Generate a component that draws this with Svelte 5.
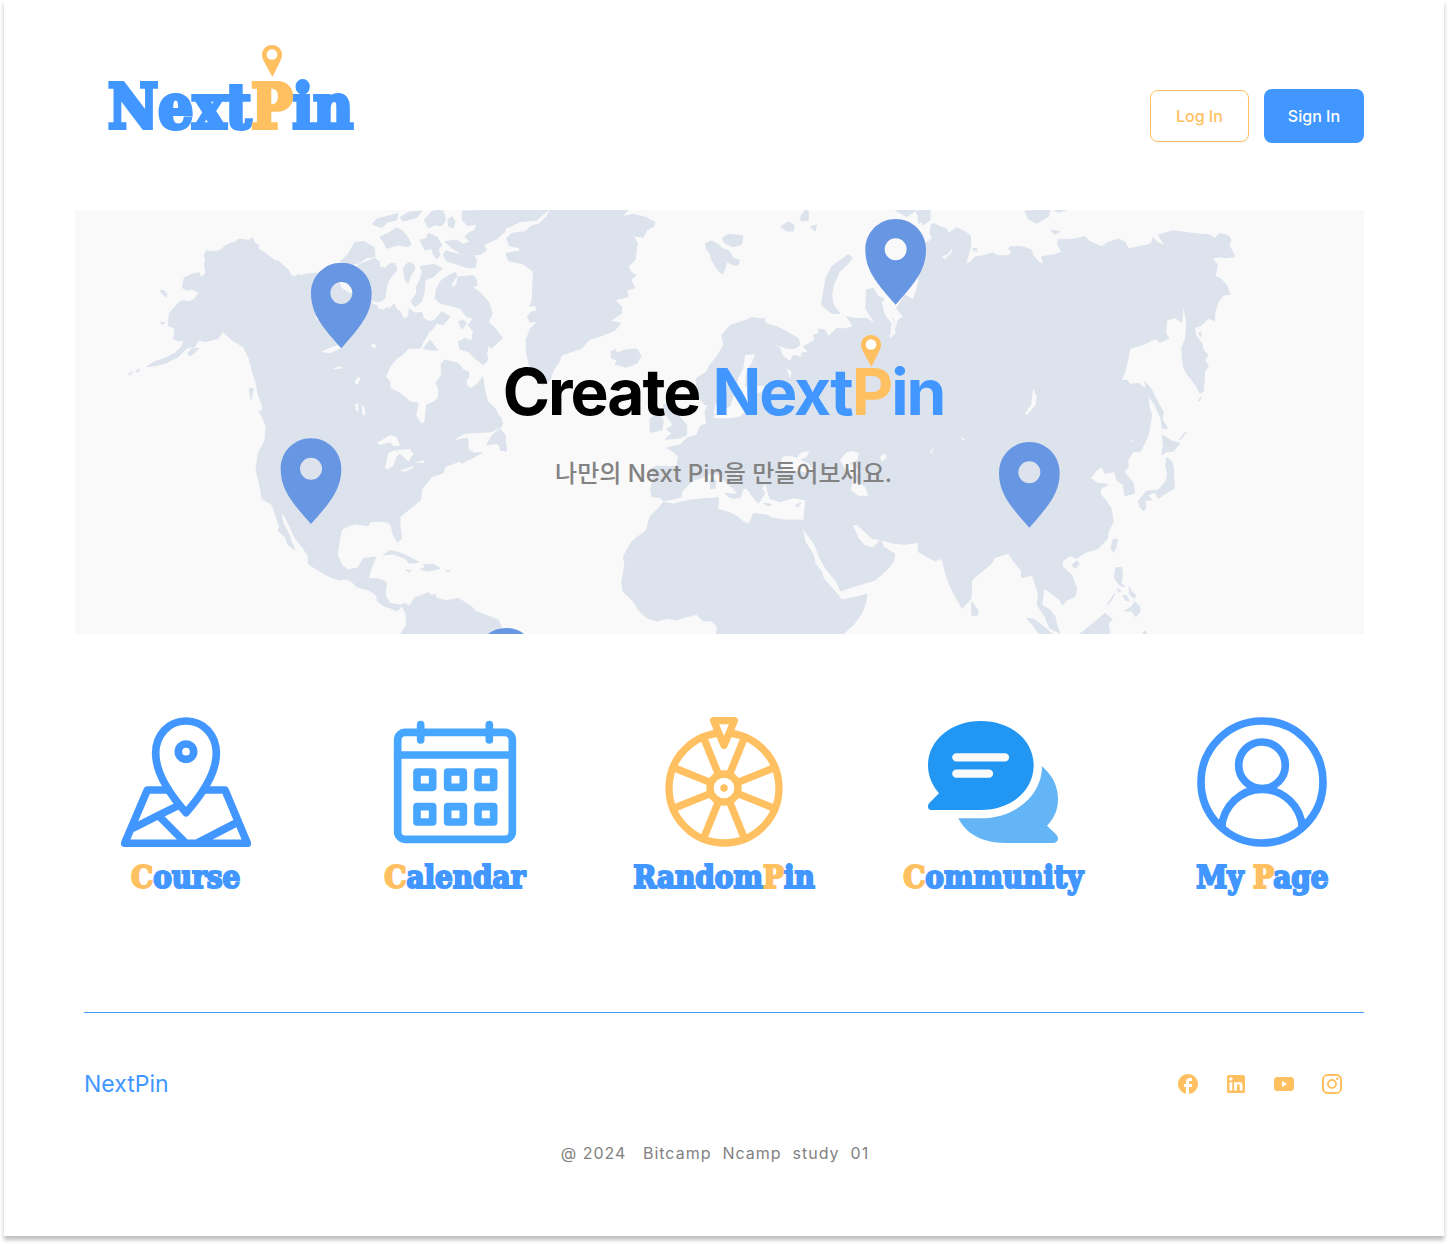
<script>
  const pins = [
    { x: 799, y: 173 },
    { x: 708, y: 700 },
    { x: 2462, y: 42 },
    { x: 2863, y: 711 },
    { x: 1293, y: 1269 }
  ];
  const dayCells = [
    [951, 216], [1043, 216], [1134, 216],
    [951, 320], [1043, 320], [1134, 320]
  ];
  const spokes = [22, 68, 112, 158, 202, 248, 292, 338];
  const features = [
    { id: 'course', parts: [['C', true], ['ourse', false]] },
    { id: 'calendar', parts: [['C', true], ['alendar', false]] },
    { id: 'random', parts: [['Random', false], ['P', true], ['in', false]] },
    { id: 'community', parts: [['C', true], ['ommunity', false]] },
    { id: 'mypage', parts: [['My ', false], ['P', true], ['age', false]] }
  ];
</script>

{#snippet smallPin()}
  <svg class="small-pin" viewBox="0 0 20 32" aria-hidden="true">
    <path fill="#ffc061" d="M10 0C4.300 0 0 4.300 0 9.800C0 12 .8 14 1.600 15.700L10.400 32L18.400 15.700C19.200 14 20 12 20 9.800C20 4.300 15.700 0 10 0Z" />
    <circle cx="10" cy="9.500" r="5.300" fill="#fff" />
  </svg>
{/snippet}

<div class="sheet">
  <header>
    <a class="logo" href="#home">Next<span class="gold pinned">P{@render smallPin()}</span>in</a>
    <div class="actions">
      <button class="login" type="button">Log In</button>
      <button class="signin" type="button">Sign In</button>
    </div>
  </header>

  <main>
    <section class="hero">
      <svg class="map" viewBox="0 15 3867 1272" preserveAspectRatio="xMidYMid slice" aria-hidden="true">
        <rect y="15" width="3867" height="1272" fill="#f9f9f9" />
        <g fill="#dde3ed" stroke="#dde3ed" stroke-width="3" stroke-linejoin="round">
          <!-- North and Central America -->
          <path d="M388 150L395 137 410 140 432 138 448 125 465 115 480 113 488 103 505 103 520 107 532 98 538 113 550 120 552 135 566 140 580 152 600 167 612 169 625 182 640 195 650 214 660 215 668 209 680 212 692 207 720 205 800 225 885 290 905 300 910 312 925 315 945 302 958 298 965 315 975 318 985 343 1000 335 1003 312 1020 325 1040 322 1045 340 1065 350 1060 385 1045 410 1035 430 1000 430 985 447 965 460 945 485 932 515 945 530 945 550 975 565 1005 590 1030 595 1022 632 1040 657 1050 650 1055 600 1075 592 1090 580 1092 555 1083 535 1100 510 1098 480 1108 465 1130 470 1150 475 1165 495 1180 500 1182 515 1172 530 1178 545 1190 550 1210 535 1223 515 1230 560 1238 590 1262 612 1270 630 1280 640 1280 665 1250 680 1170 685 1150 695 1130 710 1160 702 1178 700 1180 735 1200 745 1222 742 1200 755 1160 775 1155 768 1110 785 1105 803 1070 815 1055 835 1040 852 1037 885 1000 915 975 935 975 965 980 1000 968 1012 955 990 948 960 938 952 915 948 885 950 880 962 840 957 815 965 800 975 793 1005 787 1050 800 1080 820 1095 850 1088 865 1060 902 1057 890 1085 880 1120 910 1122 935 1132 930 1170 945 1195 975 1200 990 1195 1003 1203 1020 1178 1062 1163 1068 1172 1080 1168 1085 1180 1115 1187 1150 1180 1170 1192 1190 1205 1200 1218 1230 1230 1270 1245 1280 1270 1290 1290 975 1290 995 1260 993 1225 980 1203 965 1218 945 1208 930 1205 907 1188 905 1172 885 1157 845 1145 830 1130 815 1122 795 1125 770 1118 745 1105 720 1090 700 1077 700 1055 685 1030 660 1000 645 965 632 940 625 926 618 930 625 955 640 985 650 1012 660 1035 640 1020 630 995 610 978 613 965 605 940 592 900 562 882 552 830 543 795 550 745 570 705 573 665 560 630 562 600 550 570 545 540 535 510 522 460 505 425 470 405 445 380 438 388 425 400 390 410 370 405 360 425 335 430 310 455 270 475 240 482 215 485 240 470 270 460 300 445 320 425 328 405 312 408 296 402 300 370 280 362 283 325 300 305 318 287 345 290 360 280 373 262 350 252 335 256 322 248 328 218 350 208 372 203 378 218 393 205 388 180 392 165Z" />
          <!-- Arctic archipelago -->
          <path d="M797 168L818 150 840 112 868 110 898 128 900 155 875 158 850 175 820 180ZM835 200L850 180 900 160 915 172 912 185 930 190 945 175 960 175 966 195 945 220 935 242 930 280 915 292 885 285 880 220ZM892 58L905 42 945 32 968 25 965 45 940 50 920 68ZM915 95L940 85 965 68 985 80 1000 100 1008 118 1000 125 970 120 935 130 925 110ZM975 38L1000 22 1040 18 1025 38 985 48ZM985 190L1000 172 1015 178 1020 192 1005 215 1000 235 990 225ZM1035 185L1075 178 1102 190 1075 215 1050 225 1048 260 1040 290 1020 305 1008 290 1025 265 1025 245 1035 225 1042 200ZM1035 105L1055 100 1060 85 1085 95 1100 120 1090 135 1095 150 1085 162 1075 148 1070 130 1050 135ZM1048 45L1070 20 1085 16 1105 18 1112 45 1100 62 1080 60 1060 68ZM1118 45L1130 35 1140 48 1135 68 1122 65ZM1162 18L1290 15 1290 80 1265 102 1225 120 1235 135 1215 148 1195 150 1205 165 1200 188 1175 188 1155 180 1115 168 1105 150 1112 138 1140 145 1165 150 1130 128 1110 110 1145 105 1165 118 1185 110 1170 95 1180 85 1200 75 1205 58 1178 62 1162 45ZM1080 280L1085 250 1100 225 1120 212 1142 202 1145 215 1130 235 1130 250 1145 238 1150 215 1195 212 1205 225 1206 242 1190 245 1215 262 1240 290 1252 325 1240 350 1260 370 1282 400 1270 410 1250 430 1240 420 1235 445 1238 465 1225 480 1200 460 1180 440 1155 432 1150 410 1170 400 1190 408 1195 380 1180 360 1195 340 1175 335 1155 310 1120 300 1095 295ZM1070 375L1085 355 1105 360 1125 335 1100 320 1080 345 1065 350 1060 380ZM1045 430L1065 405 1088 435 1065 435ZM1150 350L1165 345 1175 355 1160 372Z" />
          <!-- Pacific and Caribbean islands -->
          <path d="M255 258L265 255 277 268 272 276ZM255 352L270 352 262 358ZM338 445L350 432 372 430 360 442 345 453ZM388 395L405 378 425 372 440 382 430 400 395 408ZM160 507L173 500 165 510ZM182 498L195 492 188 502ZM523 550L535 552 528 585ZM550 618L575 632 590 650 585 662 570 645ZM925 1050L945 1037 970 1042 1000 1055 1032 1072 1003 1075 990 1060 955 1047ZM1035 1093L1050 1088 1045 1078 1075 1078 1095 1090 1062 1098ZM992 1095L1008 1096 1003 1101ZM1112 1096L1126 1096 1118 1100ZM1235 720L1252 690 1275 672 1290 690 1292 738 1265 715Z" />
        </g>
        <!-- Lakes and the Amundsen Gulf -->
        <g fill="#f9f9f9">
          <path d="M905 715L945 690 965 695 975 722 955 722 945 712 915 720ZM930 790L940 745 960 735 975 745 965 755 955 782 938 793ZM965 735L1005 732 1015 748 1000 770 985 755ZM975 797L1015 782 1015 788 990 800ZM1018 772L1050 766 1045 774ZM738 440L765 428 790 420 800 428 765 445ZM775 490L795 484 805 489 785 493ZM838 535L848 515 857 520 848 538ZM840 598L850 595 850 622 843 615ZM860 600L868 605 872 632 862 628ZM888 420L898 415 905 425 895 430ZM790 225L840 225 840 268 820 262 800 248ZM720 338L732 330 728 345ZM888 295L912 290 935 290 955 298 945 308 925 305 910 300Z" />
        </g>
        <g transform="translate(1275 0)">
          <g fill="#dde3ed" stroke="#dde3ed" stroke-width="3" stroke-linejoin="round">
            <!-- Greenland, Iceland, Svalbard -->
            <path d="M0 15L145 15 110 45 60 50 30 65 0 75ZM20 100L35 85 75 80 95 62 115 58 140 35 150 15 385 15 365 35 400 28 440 38 465 52 460 65 440 75 430 97 400 92 412 115 405 165 385 185 395 205 408 210 392 225 405 248 380 255 385 275 345 285 365 305 365 325 330 348 362 355 345 375 310 390 270 402 245 430 185 450 175 475 160 495 150 525 130 540 105 510 88 480 80 445 78 405 92 370 115 348 90 352 82 335 95 320 112 318 105 300 90 305 97 280 100 200 70 177 25 167 18 145 60 138 58 128 28 122ZM333 440L345 433 350 445 375 435 410 432 424 455 410 475 378 487 345 478 352 465 335 460ZM617 115L635 108 655 118 665 130 680 135 690 142 700 160 718 165 715 180 700 180 680 170 675 190 667 208 650 190 635 165 630 145 618 130ZM667 100L685 88 728 92 725 118 700 125 675 115ZM842 65L865 50 882 60 880 78 860 78ZM900 40L915 15 925 18 925 45 905 48ZM930 65L950 60 945 78ZM1185 15L1250 15 1220 35ZM1248 20L1290 15 1290 45 1270 60Z" />
            <path d="M965 300L970 265 978 220 995 185 1030 160 1045 148 1058 160 1040 180 1018 200 1000 240 995 270 1000 300 1020 325 995 325Z" />
            <!-- Europe and western Asia -->
            <path d="M590 520L620 500 630 480 650 455 672 420 665 392 690 362 718 352 740 345 755 338 795 342 795 355 830 365 850 375 895 400 900 420 885 430 860 430 815 415 840 430 845 450 870 470 880 450 905 458 905 445 925 440 910 425 945 405 940 390 958 385 955 372 975 375 985 395 1010 370 1030 372 1060 365 1040 335 1060 340 1100 340 1130 360 1115 340 1097 310 1100 255 1120 250 1135 275 1150 280 1160 320 1180 340 1185 380 1160 395 1180 395 1195 345 1210 335 1190 310 1215 270 1240 285 1260 220 1275 180 1290 140 1320 120 1320 1060 1290 1050 1255 1012 1215 1018 1180 1015 1145 1005 1115 1000 1095 980 1070 958 1057 960 1075 1000 1095 1022 1120 1028 1143 1003 1150 1025 1185 1048 1180 1070 1160 1095 1125 1125 1060 1145 1022 1158 1010 1130 980 1095 960 1060 945 1020 912 975 912 940 917 885 880 878 840 890 810 880 800 850 795 835 785 850 795 865 775 895 755 870 740 850 720 810 700 790 705 805 745 850 730 850 720 878 700 878 712 865 700 850 680 835 660 808 630 805 600 820 580 825 565 840 545 860 545 875 520 882 490 888 480 877 455 875 452 850 460 820 455 790 470 783 530 785 535 755 520 740 500 728 540 720 560 700 590 690 600 665 620 655 615 620 625 595 645 595 640 625 660 635 685 625 640 590 615 600 590 570Z" />
            <!-- British Isles -->
            <path d="M490 600L520 585 530 625 560 660 560 690 535 700 495 703 515 685 500 672 520 660 505 640 495 625ZM450 640L480 628 490 650 485 675 450 682Z" />
            <!-- Africa -->
            <path d="M490 892L520 897 570 885 630 880 655 878 655 890 652 912 680 920 705 930 730 950 745 957 755 940 760 925 800 930 815 938 850 945 905 945 912 950 908 975 915 1010 940 1050 945 1075 965 1100 970 1120 1010 1165 1025 1185 1060 1178 1100 1168 1098 1190 1085 1225 1060 1260 1025 1290 650 1290 652 1265 635 1248 610 1248 590 1228 560 1235 530 1245 500 1240 470 1248 440 1238 415 1215 405 1195 370 1160 365 1130 375 1080 370 1055 395 1010 440 975 450 935 475 910ZM675 865L710 868 708 880 690 878ZM790 895L815 898 805 903ZM885 902L902 893 895 905ZM630 825L648 825 645 850 632 852Z" />
            <path d="M0 640L8 655 0 670ZM0 700L15 700 20 738 0 735Z" />
          </g>
          <!-- Baltic, Black and Caspian seas -->
          <g fill="#f9f9f9">
            <path d="M640 640L650 618 690 605 705 560 715 520 730 490 735 450 765 448 755 475 738 500 735 545 790 542 800 555 745 575 748 605 720 635 690 640ZM842 775L848 755 870 752 890 758 905 742 928 738 920 755 900 765 925 775 940 795 925 803 890 798 850 800ZM1020 765L1040 742 1060 738 1077 745 1072 765 1048 775 1085 800 1068 812 1070 830 1095 845 1105 872 1075 872 1052 855 1058 830 1040 800ZM1140 755L1155 745 1160 760 1145 770ZM860 490L875 500 870 520ZM1145 290L1158 285 1165 310 1180 345 1187 385 1170 400 1175 355 1155 330Z" />
          </g>
        </g>
        <g transform="translate(2550 0)">
          <g fill="#dde3ed" stroke="#dde3ed" stroke-width="3" stroke-linejoin="round">
            <!-- Asia -->
            <path d="M-20 120L10 110 22 100 15 85 18 60 28 56 45 65 65 72 70 85 95 68 115 78 135 90 138 120 128 155 122 178 138 170 150 155 175 152 205 143 215 152 250 152 262 140 250 132 255 125 290 125 320 135 322 148 340 170 355 180 350 155 385 150 410 142 398 118 400 103 445 103 480 95 495 110 530 125 550 112 580 102 600 112 610 132 640 125 670 120 680 112 685 98 695 112 720 122 700 90 745 77 800 85 855 90 878 108 870 98 885 85 910 92 918 105 912 120 930 155 900 158 885 155 862 160 878 180 870 215 885 220 905 240 915 268 895 270 880 290 870 320 868 347 850 340 830 360 808 368 812 390 830 415 835 435 848 450 840 465 850 485 838 500 838 520 835 560 825 565 815 545 800 525 785 505 775 485 770 430 782 400 785 350 775 300 770 352 750 338 725 345 722 385 732 400 705 412 695 403 680 405 665 415 615 430 608 465 600 500 588 528 605 525 615 538 640 535 660 550 670 580 672 605 680 630 670 690 655 722 645 740 625 740 608 765 610 785 597 800 625 835 628 865 600 872 595 840 575 825 570 800 540 805 530 785 515 795 495 820 520 835 550 838 528 850 525 865 545 890 558 910 565 950 548 985 548 1000 520 1030 480 1043 455 1060 435 1052 412 1070 412 1085 440 1110 455 1150 450 1175 425 1185 412 1200 405 1185 380 1165 357 1150 350 1200 375 1215 390 1235 395 1260 405 1285 375 1270 360 1235 337 1200 340 1165 322 1110 290 1118 288 1095 270 1075 250 1045 208 1058 200 1075 170 1100 140 1125 138 1180 112 1210 100 1190 78 1150 65 1115 50 1060 30 1068 -20 1040Z" />
            <!-- Pacific rim islands -->
            <path d="M660 530L680 555 700 595 715 620 712 645 728 670 712 670 708 640 690 600 665 565ZM712 690L740 708 765 715 745 738 725 740 710 750 715 725ZM725 758L740 770 745 790 748 850 730 860 700 880 690 862 668 870 680 885 660 885 662 910 655 918 645 905 640 888 665 858 700 855 722 830 728 805 722 785ZM762 705L778 685 785 682 768 702ZM558 1030L565 1003 577 1003 572 1030 565 1042ZM442 1078L455 1068 463 1075 455 1088 445 1087ZM568 1120L572 1088 590 1088 592 1110 588 1135 600 1145 585 1142ZM578 1150L588 1160 580 1160ZM595 1170L605 1172 612 1188 600 1185ZM612 1145L620 1160 632 1170 628 1180 615 1170ZM545 1200L570 1165 560 1185ZM598 1218L620 1205 630 1190 645 1205 645 1222 632 1235 620 1218ZM460 1290L480 1275 510 1250 540 1225 562 1243 550 1255 555 1290ZM305 1240L325 1242 350 1260 385 1290 345 1290 325 1262ZM140 1190L160 1218 155 1232 140 1230ZM650 1290L660 1278 668 1290Z" />
            <path d="M-20 15L0 18 10 38-20 55ZM300 18L375 15 370 35 335 55 310 42ZM388 15L425 15 400 22ZM378 75L405 80 388 88ZM142 132L155 130 155 140ZM820 385L828 380 828 395ZM820 588L828 575 825 585Z" />
          </g>
          <path fill="#f9f9f9" d="M325 550L335 575 332 600 305 630 300 625 318 600ZM103 695L120 703 117 708ZM13 743L27 727 20 745ZM50 155L68 148 82 130 80 142 60 163ZM617 702L623 706 618 711Z" />
        </g>
        {#each pins as pin}
          <path transform={`translate(${pin.x} ${pin.y})`} fill="#6796e2" fill-rule="evenodd" d="M0 0C-50 0-91 40-91 92C-91 155-55 195 0 257C55 195 91 155 91 92C91 40 50 0 0 0ZM0 58A33 33 0 1 1 0 124A33 33 0 1 1 0 58Z" />
        {/each}
      </svg>
      <h1>Create <span class="blue">Next<span class="gold pinned">P{@render smallPin()}</span>in</span></h1>
      <p>나만의 Next Pin을 만들어보세요.</p>
    </section>

    <nav class="features" aria-label="Services">
      {#each features as feature}
        <a href={`#${feature.id}`}>
          {#if feature.id === 'course'}
            <svg viewBox="63 51 390 390" fill="none" stroke="#4197ff" stroke-width="23" stroke-linejoin="round" aria-hidden="true">
              <path d="M258 338C220 295 167 225 167 160C167 105 205 63 258 63S349 105 349 160C349 225 296 295 258 338Z" />
              <circle cx="258" cy="155" r="23" />
              <path d="M204 270H142L74 430H442L375 270H312M98 385L175 346L236 316M175 346L256 428M292 429L414 366" />
            </svg>
          {:else if feature.id === 'calendar'}
            <svg viewBox="870 51 390 390" fill="none" stroke="#47a6ff" stroke-width="23" stroke-linejoin="round" stroke-linecap="round" aria-hidden="true">
              <rect x="893" y="97" width="344" height="321" rx="23" />
              <path d="M893 165H1237M962 74V120M1168 74V120" />
              {#each dayCells as [x, y]}
                <rect {x} {y} width="47" height="46" />
              {/each}
            </svg>
          {:else if feature.id === 'random'}
            <svg viewBox="147 51 390 390" fill="none" stroke="#ffc061" stroke-width="22" stroke-linejoin="round" aria-hidden="true">
              <circle cx="342" cy="264" r="165" />
              <circle cx="342" cy="264" r="42" />
              {#each spokes as angle}
                <path transform={`rotate(${angle} 342 264)`} d="M387 264H502" />
              {/each}
              <circle cx="342" cy="264" r="11" fill="#ffc061" stroke="none" />
              <path fill="#fff" d="M311 62H373L342 136Z" />
            </svg>
          {:else if feature.id === 'community'}
            <svg viewBox="144 51 390 390" aria-hidden="true">
              <path fill="#2196f3" d="M302 63C215 63 144 120 144 196C144 228 157 257 177 280L148 309C140 318 144 330 155 330H302C390 330 461 275 461 196S390 63 302 63Z" />
              <path fill="#64b5f6" d="M486 199C518 226 534 260 534 297C534 330 522 356 501 377L530 405C538 415 533 429 521 429H373C309 429 258 402 235 355H302C404 355 486 288 486 199Z" />
              <path stroke="#fafafa" stroke-width="25" stroke-linecap="round" d="M229 172H375M229 221H327" />
            </svg>
          {:else}
            <svg viewBox="951 51 390 390" fill="none" stroke="#4197ff" stroke-width="23" aria-hidden="true">
              <circle cx="1146" cy="246" r="183" />
              <circle cx="1146" cy="196" r="70" />
              <path d="M1025 382C1030 318 1082 268 1146 268S1262 318 1267 382" />
            </svg>
          {/if}
          <span class="label">{#each feature.parts as [text, gold]}<span class={{ gold }}>{text}</span>{/each}</span>
        </a>
      {/each}
    </nav>
  </main>

  <footer>
    <div class="footer-row">
      <a class="brand" href="#home">NextPin</a>
      <div class="social">
        <a href="#facebook" aria-label="Facebook"><svg viewBox="0 0 24 24"><path d="M22 12C22 6.480 17.520 2 12 2S2 6.480 2 12C2 16.840 5.440 20.870 10 21.800V15H8V12H10V9.500C10 7.570 11.570 6 13.500 6H16V9H14C13.450 9 13 9.450 13 10V12H16V15H13V21.950C18.050 21.450 22 17.190 22 12Z" /></svg></a>
        <a href="#linkedin" aria-label="LinkedIn"><svg viewBox="0 0 24 24"><path d="M19 3A2 2 0 0 1 21 5V19A2 2 0 0 1 19 21H5A2 2 0 0 1 3 19V5A2 2 0 0 1 5 3H19M18.500 18.500V13.200A3.260 3.260 0 0 0 15.240 9.940C14.390 9.940 13.400 10.460 12.920 11.240V10.130H10.130V18.500H12.920V13.570C12.920 12.800 13.540 12.170 14.310 12.170A1.400 1.400 0 0 1 15.710 13.570V18.500H18.500M6.880 8.560A1.680 1.680 0 0 0 8.560 6.880C8.560 5.950 7.810 5.190 6.880 5.190A1.690 1.690 0 0 0 5.190 6.880C5.190 7.810 5.950 8.560 6.880 8.560M8.270 18.500V10.130H5.500V18.500H8.270Z" /></svg></a>
        <a href="#youtube" aria-label="YouTube"><svg viewBox="0 0 24 24"><path fill-rule="evenodd" d="M6 5H18C21 5 22 6 22 9V15C22 18 21 19 18 19H6C3 19 2 18 2 15V9C2 6 3 5 6 5ZM10 9V15L15 12Z" /></svg></a>
        <a href="#instagram" aria-label="Instagram"><svg viewBox="0 0 24 24"><path fill-rule="evenodd" d="M7.800 2H16.200C19.400 2 22 4.600 22 7.800V16.200A5.800 5.800 0 0 1 16.200 22H7.800C4.600 22 2 19.400 2 16.200V7.800A5.800 5.800 0 0 1 7.800 2M7.600 4A3.600 3.600 0 0 0 4 7.600V16.400C4 18.390 5.610 20 7.600 20H16.400A3.600 3.600 0 0 0 20 16.400V7.600C20 5.610 18.390 4 16.400 4H7.600M17.250 5.500A1.250 1.250 0 1 1 17.250 8A1.250 1.250 0 0 1 17.250 5.500M12 7A5 5 0 1 1 12 17A5 5 0 0 1 12 7M12 9A3 3 0 1 0 12 15A3 3 0 0 0 12 9Z" /></svg></a>
      </div>
    </div>
    <p class="copyright">@ 2024&nbsp; &nbsp;Bitcamp&nbsp; Ncamp&nbsp; study&nbsp; 01</p>
  </footer>
</div>

<style>
  :global(body) {
    background: #fff;
    font-family: Inter, "Noto Sans CJK KR", sans-serif;
  }
  .sheet {
    margin: 0 4px 8px;
    padding-bottom: 71px;
    background: #fff;
    box-shadow: 0 4px 4px rgba(0, 0, 0, 0.25);
  }
  a {
    color: inherit;
    text-decoration: none;
  }
  svg {
    display: block;
  }
  .gold {
    color: #ffc061;
  }
  .blue {
    color: #4197ff;
  }
  header {
    display: flex;
    justify-content: space-between;
    align-items: flex-start;
    padding: 70px 80px 67px 104px;
  }
  .logo,
  .label {
    color: #4197ff;
    font-family: "DejaVu Serif Condensed", "DejaVu Serif", serif;
    font-stretch: condensed;
    font-weight: 700;
    white-space: nowrap;
  }
  .logo {
    font-size: 61px;
    line-height: 73px;
    -webkit-text-stroke: 4px;
    paint-order: stroke fill;
  }
  .pinned {
    position: relative;
  }
  .small-pin {
    position: absolute;
    left: 50%;
    top: -18px;
    width: 20px;
    height: 32px;
    margin-left: -10px;
  }
  .logo .small-pin {
    top: -26px;
  }
  .actions {
    display: flex;
    align-items: center;
    gap: 15px;
    padding-top: 19px;
  }
  button {
    font: 500 16px/24px Inter, sans-serif;
    border-radius: 8px;
    cursor: pointer;
  }
  .login {
    padding: 13px 25px;
    color: #ffc061;
    background: #fff;
    border: 1px solid #ffc061;
    box-shadow: 0 1px 2px rgba(0, 0, 0, 0.05);
  }
  .signin {
    padding: 15px 24px;
    color: #fff;
    background: #4197ff;
    border: 0;
  }
  .hero {
    display: flex;
    flex-direction: column;
    align-items: center;
    position: relative;
    margin: 0 80px 0 71px;
    padding: 143px 0 142px;
    overflow: hidden;
  }
  .map {
    position: absolute;
    inset: 0;
    width: 100%;
    height: 100%;
  }
  h1 {
    position: relative;
    margin: 0;
    padding-left: 8px;
    font-size: 64px;
    line-height: 77px;
    font-weight: 700;
    letter-spacing: -2px;
  }
  .hero p {
    position: relative;
    margin: 26px 0 0;
    padding-left: 8px;
    color: #828282;
    font-size: 24px;
    line-height: 36px;
    font-weight: 500;
  }
  .features {
    display: grid;
    grid-template-columns: repeat(5, 1fr);
    padding: 83px 47px 112px;
  }
  .features a {
    display: flex;
    flex-direction: column;
    align-items: center;
    gap: 10px;
  }
  .features svg {
    width: 130px;
    height: 130px;
  }
  .label {
    padding-bottom: 2px;
    font-size: 31px;
    line-height: 41px;
    white-space: pre;
    -webkit-text-stroke: 2px;
    paint-order: stroke fill;
  }
  footer {
    margin: 0 80px;
    border-top: 1px solid #4197ff;
  }
  .footer-row {
    display: flex;
    justify-content: space-between;
    align-items: center;
    padding: 53px 20px 0 0;
  }
  .brand {
    color: #4197ff;
    font-size: 23px;
    line-height: 36px;
  }
  .social {
    display: flex;
    gap: 24px;
  }
  .social svg {
    width: 24px;
    height: 24px;
    fill: #ffc061;
  }
  .copyright {
    margin: 39px 18px 0 0;
    color: #828282;
    font-size: 16px;
    line-height: 24px;
    letter-spacing: 1px;
    text-align: center;
  }
</style>
